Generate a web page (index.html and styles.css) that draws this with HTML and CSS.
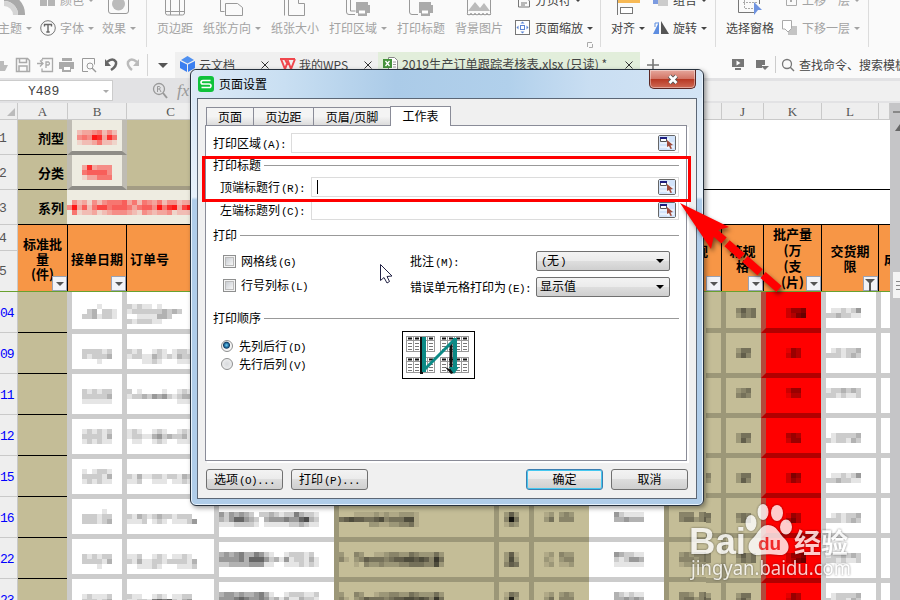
FILE: index.html
```
<!DOCTYPE html>
<html lang="zh-CN">
<head>
    <meta charset="UTF-8">
    <meta name="viewport" content="width=device-width, initial-scale=1.0">
    <title>页面设置</title>
    <link rel="stylesheet" href="styles.css">
</head>
<body>
    <div class="app">
        <!-- Ribbon -->
        <div class="ribbon">
            <div class="tool theme">
                <svg class="icon" width="40" height="16"><path d="M4 -6A20 20 0 0 1 25 15H18A14 14 0 0 0 4 1z" fill="#aaa"/><path d="M4 1A14 14 0 0 1 18 15H13A9 9 0 0 0 4 6z" fill="#d5d5d5"/></svg>
                <div class="label">主题<i class="caret"></i></div>
            </div>
            <div class="tool font">
                <div class="label upper"><svg width="16" height="16"><path d="M0 0h7v14H0zM8 0h7v14H8z" fill="#b5b5b5"/></svg>颜色<i class="caret"></i></div>
                <div class="label"><svg width="16" height="16"><circle cx="8" cy="8" r="7.3" fill="none" stroke="#777"/><path d="M4.5 6.500V4.500h7v2M8 4.500v7.500M6.300 12h3.400" fill="none" stroke="#666" stroke-width="1.400"/></svg>字体<i class="caret"></i></div>
            </div>
            <div class="tool effect line">
                <svg class="icon" width="44" height="16"><path d="M6.500 0v11q0 2.500 2.500 2.500h15q2.500 0 2.500-2.500V0" fill="none" stroke="#999"/><circle cx="16.500" cy="4" r="6.500" fill="#bbb"/></svg>
                <div class="label">效果<i class="caret"></i></div>
            </div>
            <div class="tool margins">
                <svg class="icon" width="40" height="16"><path d="M8.500 0v13q0 2 2 2h15q2 0 2-2V0M13.500 0v15M22.500 0v15M9 11.500h18" fill="none" stroke="#999"/></svg>
                <div class="label">页边距</div>
            </div>
            <div class="tool wide">
                <svg class="icon" width="48" height="16"><path d="M17.500 0v11.500h4M22.500 15.500v-12h12l5 4v8z" fill="none" stroke="#999"/></svg>
                <div class="label">纸张方向<i class="caret"></i></div>
            </div>
            <div class="tool narrow">
                <svg class="icon" width="48" height="16"><path d="M13.500 0v15.500M17.500 0v15.500h16V3.500h-6V0" fill="none" stroke="#999"/></svg>
                <div class="label">纸张大小</div>
            </div>
            <div class="tool wide">
                <svg class="icon" width="48" height="16"><path d="M17.500 0v12q0 2.500 2.500 2.500h6M21.500 0v11h5" fill="none" stroke="#999"/><path d="M27 4v-2h12v3h2v8h-3v3H29v-3h-2V4z" fill="#aaa"/><path d="M30 10.500h6v3h-6z" fill="#fff"/></svg>
                <div class="label">打印区域<i class="caret"></i></div>
            </div>
            <div class="tool narrow">
                <svg class="icon" width="48" height="16"><path d="M12.500 0v12q0 2.500 2.500 2.500h6" fill="none" stroke="#999"/><path d="M22 4v-2h12v3h2v8h-3v3H24v-3h-2V4z" fill="#aaa"/><path d="M25 10.500h6v3h-6z" fill="#fff"/></svg>
                <div class="label">打印标题</div>
            </div>
            <div class="tool picture">
                <svg class="icon" width="48" height="16"><path d="M12.500 0v13.500M35.500 0v13.500M12 14.500h24" fill="none" stroke="#999"/><path d="M13 11l7-9 5 6 4-5 6 8z" fill="#bbb"/><path d="M12 13q2 4 4 0q2 4 4 0q2 4 4 0q2 4 4 0q2 4 4 0q2 4 4 0" fill="none" stroke="#aaa"/></svg>
                <div class="label">背景图片</div>
            </div>
            <div class="tool scale line dark">
                <div class="label upper"><svg width="16" height="16"><path d="M3.500 8v7h11V9l-3-3H8M6 11h6M6 13h4" fill="none" stroke="#777"/></svg>分页符<i class="caret"></i></div>
                <div class="label"><svg width="16" height="16"><rect x=".5" y=".5" width="14" height="14" fill="#fff" stroke="#777"/><rect x="5.500" y="5.500" width="4" height="4" fill="none" stroke="#5d86d6"/><path d="M7.500 1.500l2 2h-4zM7.500 13.500l2-2h-4zM1.500 7.500l2-2v4zM13.500 7.500l-2-2v4z" fill="#5d86d6"/></svg>页面缩放<i class="caret"></i></div>
                <svg class="launcher" width="6" height="6"><path d="M.5 5V.5H5M5.500 2v3.500H2" fill="none" stroke="#aaa"/></svg>
            </div>
            <div class="tool align dark">
                <svg class="icon" width="42" height="16"><path d="M6.500 0v15" stroke="#777"/><path d="M7 0h22v3H7z" fill="#f7b955"/><rect x="9.500" y="7.500" width="12" height="6" fill="#fff" stroke="#777"/></svg>
                <div class="label">对齐<i class="caret"></i></div>
            </div>
            <div class="tool rotate line dark">
                <div class="label upper"><svg width="16" height="16"><path d="M0 5h9v7H0z" fill="#7c9be0"/><path d="M5 8h10v6H5z" fill="#ccc"/></svg>组合<i class="caret"></i></div>
                <div class="label"><svg width="16" height="16"><path d="M0 14L6 2v12z" fill="#5d8de0"/><path d="M8 14V1l8 13z" fill="#555"/><path d="M2 7V3h4" fill="none" stroke="#5d8de0"/></svg>旋转<i class="caret"></i></div>
            </div>
            <div class="tool pane dark">
                <svg class="icon" width="48" height="16"><path d="M12.500 0v12.500h16M33.500 0v4" fill="none" stroke="#777"/><path d="M18.500 0v8.500h9M17 2.500h15" fill="none" stroke="#aaa" stroke-dasharray="2 1"/><path d="M28 2l8 8h-4l-4 5z" fill="#6f93e0"/></svg>
                <div class="label">选择窗格</div>
            </div>
            <div class="tool layer line">
                <div class="label upper"><svg width="16" height="16"><path d="M4.500 4v9.500h10V5" fill="none" stroke="#aaa"/><path d="M9 10V5" stroke="#aaa" stroke-width="2"/></svg>上移一层<i class="caret"></i></div>
                <div class="label"><svg width="16" height="16"><path d="M6 6h9v9H6z" fill="#c4c4c4"/><path d="M.5.5h9v8L6 12 3 9H.5z" fill="#fff" stroke="#aaa"/></svg>下移一层<i class="caret"></i></div>
            </div>
        </div>

        <!-- Quick access and document tabs -->
        <div class="tabbar">
            <svg class="quick" width="175" height="26">
                <path d="M0 9h4v4h4l-3 6H0z" fill="#bbb"/>
                <path d="M16.500 6.500h11l2 2v11h-13zM19.500 6.500v4h7v-4M19 19v-5h8v5" fill="none" stroke="#aaa" stroke-width="1.500"/>
                <path d="M42 6.500h10.500v13H42v-3M42 9v-2M37 11.500h6m-3-3l3 3-3 3M46 16V10h2.500q2 1.500 0 3H46" fill="none" stroke="#aaa" stroke-width="1.300"/>
                <path d="M62 6h10v3H62zM59 10h15v7h-3v3H62v-3h-3z" fill="#aaa"/><path d="M64 15h6v3h-6z" fill="#fff"/>
                <path d="M88 19.500h-5.500v-13h12v6" fill="none" stroke="#999"/><circle cx="90" cy="14" r="3" fill="none" stroke="#999"/><path d="M92 16l4 4" stroke="#999" stroke-width="1.500"/>
                <path d="M107 10q6-5 9 0q1 4-5 8" fill="none" stroke="#666" stroke-width="2.500"/><path d="M105 7v7h6z" fill="#666"/>
                <path d="M137 10q-6-5-9 0q-1 4 4 8" fill="none" stroke="#bbb" stroke-width="2.500"/><path d="M139 7v7h-6z" fill="#bbb"/>
                <path d="M147.500 2v22" stroke="#d5d5d5"/>
                <path d="M158 11h10l-5 5z" fill="#555"/>
            </svg>
            <div class="tab cloud">
                <svg width="15" height="16"><path d="M7.500 0L14 4 7.500 7.500 1 4z" fill="#4f90f0"/><path d="M0 5l7 3.500V16l-7-4z" fill="#3b7ff0"/><path d="M15 5L8 8.500V16l7-4z" fill="#3b7ff0"/></svg>
                <span>云文档</span><svg class="close" width="8" height="8"><path d="M.5.5l7 7M7.500.5l-7 7" stroke="#333"/></svg>
            </div>
            <div class="tab wps">
                <svg width="17" height="14"><path d="M1 2h15M2 2l4 10 3-8 3 8 4-10M6 2l3 6" fill="none" stroke="#f0474d" stroke-width="2"/></svg>
                <span>我的WPS</span><svg class="close" width="8" height="8"><path d="M.5.5l7 7M7.500.5l-7 7" stroke="#333"/></svg>
            </div>
            <div class="tab file">
                <svg width="15" height="14"><path d="M5.500.5h6l3 3v10h-9z" fill="#fff" stroke="#888"/><path d="M10 5h3M10 7.500h3M10 10h3" stroke="#999"/><path d="M0 2h9v9H0z" fill="#45923b"/><path d="M2.500 4l4 5M6.500 4l-4 5" stroke="#fff" stroke-width="1.300"/></svg>
                <span>2019生产订单跟踪考核表.xlsx (只读) *</span><svg class="close" width="8" height="8"><path d="M.5.5l7 7M7.500.5l-7 7" stroke="#333"/></svg>
            </div>
            <svg class="plus" width="14" height="14"><path d="M7 1v12M1 7h12" stroke="#777" stroke-width="1.600"/></svg>
            <svg class="tools" width="66" height="26"><path d="M2 7h12v8H2zM5 16h6v2H5z" fill="#777"/><path d="M6.500 8.500v5l4-2.500z" fill="#fff"/><path d="M26 8h9v5h-3v3h-6z" fill="#777"/><path d="M31 14h8l-4 4z" fill="#777"/><path d="M45.500 4v17" stroke="#ccc"/><circle cx="57" cy="12" r="4.500" fill="none" stroke="#777" stroke-width="1.300"/><path d="M60 15l4 4" stroke="#777" stroke-width="1.500"/></svg>
            <span class="search">查找命令、搜索模板</span>
        </div>

        <!-- Name box and formula bar -->
        <div class="formula">
            <div class="namebox">Y489<i class="caret"></i></div>
            <svg width="16" height="18"><circle cx="7" cy="7" r="5.500" fill="none" stroke="#999" stroke-width="1.300"/><path d="M11 11l4 5" stroke="#999" stroke-width="2"/><path d="M5.500 10V4.500h2q1.500 1 0 2.500h-2m2 0l1.500 3" fill="none" stroke="#999"/></svg>
            <span class="fx">fx</span>
            <div class="input"></div>
        </div>

        <div class="sheet">
            <div class="grid">
                <div class="frozen">
                    <div class="col corner"><svg width="8" height="8"><path d="M8 0v8H0z" fill="#bbb"/></svg></div>
                    <div class="col">A</div><div class="col">B</div><div class="col">C</div>
                    <div class="col hidden"></div>
                    <div class="col">J</div><div class="col">K</div><div class="col">L</div><div class="col"></div>

                    <div class="num">1</div>
                    <div class="name">剂型</div>
                    <div class="pale boxed"><span class="mosaic red" data-rows="23345242/45498385/12235221"></span></div>
                    <div class="khaki"></div><div class="blank"></div>

                    <div class="num">2</div>
                    <div class="name">分类</div>
                    <div class="pale boxed"><span class="mosaic red" data-rows="383444/566664/133555"></span></div>
                    <div class="khaki shaded"></div><div class="blank ruled"></div>

                    <div class="num">3</div>
                    <div class="name">系列</div>
                    <div class="pale wide"><span class="mosaic red" data-rows="0423142455563525435244233/4936257756665356649589379/0512231234443214323341222"></span></div>
                    <div class="blank"></div>

                    <div class="num two"><b>4</b><b>5</b></div>
                    <div class="head">标准批<br>量<br>(件)<i class="filter"></i></div>
                    <div class="head one">接单日期<i class="filter"></i></div>
                    <div class="head left">订单号</div>
                    <div class="head hidden end">规<br>&nbsp;<i class="filter"></i></div>
                    <div class="head">箱规<br>格<i class="filter"></i></div>
                    <div class="head tall">批产量<br>(万<br>(支<br>(片)<i class="filter"></i></div>
                    <div class="head">交货期<br>限<i class="filter funnel"></i></div>
                    <div class="head last">成</div>
                </div>
                <div class="panes">
                    <div class="rows"></div>
                    <div class="pane" id="leftPane"></div>
                    <div class="pane" id="midPane"></div>
                    <div class="pane" id="rightPane"></div>
                </div>
            </div>
            <div class="scroll">
                <svg width="10" height="200"><path d="M3 8h7v2H3z" fill="#888"/><path d="M10 21v7H5z" fill="#666"/><path d="M3 169h7v26H3z" fill="#f4f4f4"/><path d="M6 178.500h4M6 182.500h4M6 186.500h4" stroke="#888"/></svg>
            </div>
        </div>
    </div>

    <!-- Page setup dialog -->
    <div class="dialog">
        <div class="titlebar">
            <svg width="16" height="16"><rect width="16" height="16" rx="3" fill="#0fc23b"/><path d="M12.500 4.500H5q-2 0-2 1.700T5 8h6q2 0 2 1.800t-2 1.700H3.500" fill="none" stroke="#fff" stroke-width="1.600"/></svg>
            <span>页面设置</span>
            <button class="shut"><svg width="14" height="11"><path d="M3.500 2l7 7M10.500 2l-7 7" stroke="#555" stroke-width="4.500"/><path d="M3.500 2l7 7M10.500 2l-7 7" stroke="#fff" stroke-width="2.600"/></svg></button>
        </div>
        <div class="client">
            <div class="tabs">
                <div class="t1">页面</div><div class="t2">页边距</div><div class="t3">页眉/页脚</div><div class="t4 active">工作表</div>
            </div>
            <div class="panel">
                <div class="field area"><label>打印区域<s>(A):</s></label><div class="ref"><i class="picker"></i></div></div>
                <div class="legend title">打印标题</div>
                <div class="field indent"><label>顶端标题行<s>(R):</s></label><div class="ref"><em></em><i class="picker"></i></div></div>
                <div class="field indent second"><label>左端标题列<s>(C):</s></label><div class="ref"><i class="picker"></i></div></div>
                <div class="legend print">打印</div>
                <div class="options">
                    <div class="checks">
                        <div><i class="check"></i><label>网格线<s>(G)</s></label></div>
                        <div><i class="check"></i><label>行号列标<s>(L)</s></label></div>
                    </div>
                    <div class="selects">
                        <div><label>批注<s>(M):</s></label><span class="select"><s>(</s>无<s>)</s></span></div>
                        <div><label>错误单元格打印为<s>(E):</s></label><span class="select">显示值</span></div>
                    </div>
                </div>
                <div class="legend order">打印顺序</div>
                <div class="ordering">
                    <div class="radios">
                        <div><i class="radio on"></i><label>先列后行<s>(D)</s></label></div>
                        <div><i class="radio"></i><label>先行后列<s>(V)</s></label></div>
                    </div>
                    <svg class="preview" width="73" height="48">
                        <defs>
                            <g id="page">
                                <rect x=".5" y=".5" width="28" height="15" fill="#fff" stroke="#999"/>
                                <path d="M1 4.500h28M7.500 0v16M14.500 0v16M21.500 0v16" stroke="#999"/>
                                <path d="M2 2.500h4M9 2.500h4M16 2.500h4M23 2.500h4" stroke="#111" stroke-width="2"/>
                                <path d="M2 7.500h4m3 0h4m3 0h4m3 0h4M2 10.500h4m3 0h4m3 0h4m3 0h4M2 13.500h4m3 0h4m3 0h4m3 0h4" stroke="#777"/>
                            </g>
                        </defs>
                        <rect x=".5" y=".5" width="72" height="47" fill="#fff" stroke="#000"/>
                        <use href="#page" x="4" y="5"/><use href="#page" x="38" y="5"/>
                        <use href="#page" x="4" y="26"/><use href="#page" x="38" y="26"/>
                        <path d="M19.500 6v37M49 12v27" stroke="#111" stroke-width="3"/>
                        <path d="M43 36l6 7 5-2z" fill="#111"/>
                        <path d="M22 6v35M53 7v32" fill="none" stroke="#0c8a86" stroke-width="4"/>
                        <path d="M22 39L52 9" fill="none" stroke="#0c8a86" stroke-width="3"/>
                        <path d="M47 36h10l-5 7z" fill="#0c8a86"/>
                    </svg>
                </div>
            </div>
            <div class="buttons">
                <button>选项<s>(O)...</s></button>
                <button>打印<s>(P)...</s></button>
                <button class="ok">确定</button>
                <button>取消</button>
            </div>
        </div>
    </div>

    <!-- Annotation, pointer and watermark -->
    <div class="highlight"></div>
    <svg class="overlay" width="900" height="600">
        <g class="arrow">
            <path d="M680 203L729 227 715 231 711 249z" fill="#f00"/>
            <path d="M712 230L779 289" stroke="#f00" stroke-width="8" stroke-dasharray="16 4 20 4 20 4 25"/>
        </g>
        <path d="M380.500 264.500v16l3.500-3 3 5.500 2.500-1.500-2.500-5 5-.5z" fill="#fff" stroke="#224"/>
        <g class="mark">
            <text x="689" y="554" class="bai" textLength="57" lengthAdjust="spacingAndGlyphs">Bai</text>
            <ellipse cx="751" cy="523" rx="5.500" ry="8"/><ellipse cx="763" cy="512" rx="5.500" ry="8"/><ellipse cx="777" cy="513" rx="6" ry="8"/><ellipse cx="786" cy="527" rx="6" ry="7.500"/>
            <path d="M768 525c9 0 11 9 17 14c7 7 3 17-6 16c-8-1-14-1-20 0c-10 1-14-9-7-16c6-5 8-14 16-14z"/>
            <text x="758" y="550" class="du">du</text>
            <text x="794" y="553" class="jy">经验</text>
            <text x="691" y="575" class="url" textLength="160" lengthAdjust="spacingAndGlyphs">jingyan.baidu.com</text>
        </g>
    </svg>
    <script src="script.js"></script>
</body>
</html>
```
FILE: styles.css
```
body {
    margin: 0;
    width: 900px;
    height: 600px;
    overflow: hidden;
    position: relative;
    font-family: "Noto Sans CJK SC", sans-serif;
    font-size: 12px;
    color: #444;
}
svg {
    display: block;
    flex: none;
}
i, em {
    font-style: normal;
}
.app {
    display: flex;
    flex-direction: column;
    height: 600px;
}
.caret {
    border: 3px solid transparent;
    border-top-color: currentColor;
    border-bottom: 0;
    margin-left: 4px;
}
/* Ribbon */
.ribbon {
    display: flex;
    height: 52px;
    overflow: hidden;
    background: #fafafa;
    color: #a3a3a3;
    flex: none;
}
.tool {
    box-sizing: border-box;
    height: 47px;
    flex: none;
}
.dark {
    color: #444;
}
.line {
    border-right: 1px solid #dcdcdc;
}
.icon {
    height: 16px;
}
.label {
    display: flex;
    align-items: center;
    height: 24px;
    line-height: 24px;
    white-space: nowrap;
}
.label svg {
    margin-right: 4px;
}
.upper {
    margin-top: -12px;
    margin-bottom: 4px;
}
.launcher {
    margin: 2px 0 0 72px;
}
.theme { width: 40px; }
.theme .label { margin-left: -2px; }
.font { width: 62px; }
.effect { width: 45px; }
.margins { width: 56px; padding-left: 10px; }
.wide { width: 68px; }
.narrow { width: 58px; }
.picture { width: 60px; }
.scale { width: 86px; }
.align { width: 52px; padding-left: 10px; }
.rotate { width: 63px; }
.tool.pane { width: 66px; padding-left: 10px; }
.layer { width: 87px; }
/* Tabs */
.tabbar {
    display: flex;
    align-items: center;
    height: 26px;
    background: #fafafa;
    flex: none;
    overflow: hidden;
}
.tab {
    display: flex;
    flex: none;
    align-items: center;
    height: 26px;
    box-sizing: border-box;
    padding: 0 8px 2px 5px;
    background: #f0f0f0;
    white-space: nowrap;
}
.tab span {
    margin-left: 4px;
}
.cloud { width: 102px; }
.wps { width: 101px; padding: 0 6px 2px 2px; }
.wps span { margin-left: 3px; }
.file { width: 262px; padding-right: 7px; background: #e2eedb; }
.file span { font-size: 12.2px; }
.close {
    margin-left: auto;
    margin-top: 2px;
}
.plus { margin-left: 6px; }
.tools { margin-left: 70px; }
.search {
    margin-left: 3px;
    padding-bottom: 2px;
    flex: none;
    white-space: nowrap;
}
/* Formula bar */
.formula {
    display: flex;
    align-items: center;
    height: 25px;
    background: #e2e2e4;
    color: #999;
    flex: none;
}
.namebox {
    box-sizing: border-box;
    width: 113px;
    height: 21px;
    padding: 2px 3px 0 28px;
    margin-right: 39px;
    display: flex;
    align-items: center;
    background: #fff;
    border: 1px solid #ccc;
    border-left: 0;
    font: 13px "Liberation Mono", monospace;
    color: #444;
}
.namebox .caret {
    margin-left: auto;
    color: #aaa;
}
.fx {
    margin-left: 9px;
    font: italic 17px "Liberation Serif", serif;
}
.formula .input {
    flex: 1;
    height: 20px;
    margin-left: 20px;
    background: #f0f0f0;
}
/* Sheet */
.sheet {
    display: flex;
    height: 497px;
    overflow: hidden;
}
.grid {
    width: 890px;
    overflow: hidden;
}
.scroll {
    width: 10px;
    background: #c5c5c7;
}
.frozen {
    display: grid;
    grid-template-columns: 18px 50px 59px 88px 120px 160px 36px 57px 77px 57px 42px 58px 57px 11px;
    grid-template-rows: 17px 35px 35px 35px 66px;
    border-bottom: 1px solid #69a12f;
    box-sizing: border-box;
    height: 189px;
}
.col {
    background: #eee;
    border-right: 1px solid #c9c9c9;
    border-bottom: 1px solid #c9c9c9;
    font: 13px/18px "Liberation Serif", serif;
    color: #555;
    text-align: center;
}
.corner svg {
    margin: 5px 0 0 7px;
}
.num {
    background: #eee;
    border-right: 1px solid #c9c9c9;
    border-bottom: 1px solid #c9c9c9;
    font: 13px/37px "Liberation Mono", monospace;
    color: #555;
    text-indent: -1px;
}
.two {
    display: flex;
    flex-direction: column;
    border-bottom: 0;
}
.two b {
    height: 40px;
    font-weight: normal;
    line-height: 42px;
}
.two b:first-child {
    height: 25px;
    line-height: 28px;
    border-bottom: 1px solid #c9c9c9;
}
.name {
    background: #c4bd97;
    border-bottom: 1px solid #000;
    color: #000;
    font-weight: bold;
    font-size: 13px;
    line-height: 36px;
    text-align: right;
    padding-right: 4px;
}
.khaki {
    background: #c4bd97;
}
.shaded {
    box-sizing: border-box;
    border-bottom: 4px solid #a39c84;
}
.pale {
    background: #eeece1;
    display: flex;
    align-items: center;
    justify-content: center;
    overflow: hidden;
}
.boxed {
    border: 5px solid #bfbcb3;
    border-top: 0;
    border-bottom: 4px solid #8f8d87;
    margin-left: -1px;
    padding-top: 4px;
}
.pale.wide {
    width: auto;
    grid-column: 3 / 5;
    justify-content: flex-start;
    margin-left: -1px;
    border-bottom: 1px solid #000;
}
.blank {
    grid-column: 5 / 15;
    background: #fff;
}
.ruled {
    border-bottom: 1px solid #000;
}
.head {
    position: relative;
    background: #f79646;
    border: solid #000;
    border-width: 0 1px 0 0;
    box-shadow: 0 -1px 0 #000;
    color: #000;
    font-weight: bold;
    font-size: 13px;
    line-height: 15px;
    text-align: center;
    align-content: center;
    white-space: nowrap;
}
.head.left {
    text-align: left;
    padding-left: 3px;
}
.hidden {
    grid-column: 5 / 11;
}
.head.end {
    text-align: right;
    padding-right: 13px;
}
.head.tall {
    line-height: 16px;
}
.head.last {
    text-align: left;
    padding-left: 5px;
    border-right: 0;
    overflow: hidden;
}
.filter {
    position: absolute;
    right: 0;
    bottom: 0;
    width: 13px;
    height: 13px;
    border: 1px solid #9aa2b5;
    background: #f2f3f7;
}
.filter::after {
    content: "";
    position: absolute;
    left: 3px;
    top: 5px;
    border: 4px solid transparent;
    border-top-color: #555;
    border-bottom: 0;
}
.funnel::after {
    left: 1px;
    top: 2px;
    width: 2px;
    height: 4px;
    border-bottom: 4px solid transparent;
    background: linear-gradient(#555, #555) 50% 0 / 2px 8px no-repeat;
}
.mosaic {
    display: block;
}
.red {
    color: #f00;
}
.panes {
    display: flex;
    height: 308px;
    overflow: hidden;
}
.rows {
    width: 18px;
    flex: none;
    background: #eee;
}
.rows div {
    box-sizing: border-box;
    height: 41px;
    border-right: 1px solid #c9c9c9;
    border-bottom: 1px solid #c9c9c9;
    font: 13px/43px "Liberation Mono", monospace;
    letter-spacing: -1px;
    color: #00f;
}
.panes .pane {
    display: flex;
    flex: none;
}
.cell {
    box-sizing: border-box;
    border-left: 5px solid rgba(0, 0, 0, 0.2);
    border-bottom: 5px solid rgba(0, 0, 0, 0.2);
    background: #fff;
    color: #000;
    overflow: hidden;
}
.cell.tan {
    background: #c4bd97;
}
.cell.hot {
    background: #f00;
    border-left-color: #b24a3c;
    border-bottom-color: rgba(0, 0, 0, 0.3);
}
.cell.plain {
    border-left: 0;
}
.cell.rule {
    border-left: 0;
    border-bottom: 1px solid #000;
}
/* Dialog */
.dialog {
    position: absolute;
    left: 190px;
    top: 69px;
    width: 512px;
    height: 435px;
    border: 1px solid #27313d;
    border-radius: 6px;
    background: linear-gradient(#d5e5f5 0, #e8f1fa 127px, #b0cde9 130px);
    box-shadow: inset 0 0 0 1px #e9f3fc, 2px 2px 5px rgba(0, 0, 0, 0.4);
    color: #000;
}
.dialog s {
    font: 11px/12px "Liberation Mono", monospace;
    letter-spacing: -0.6px;
    text-decoration: none;
    margin-left: 1px;
}
.titlebar {
    display: flex;
    align-items: center;
    height: 28px;
    margin: 0 1px;
    padding-left: 6px;
    border-radius: 5px 5px 0 0;
    background: linear-gradient(90deg, #dce9f6, #c9dff2 18%, #abcbe8 40%, #b1d0eb 62%, #c9def2 78%, #d3e4f5);
}
.titlebar span {
    margin-left: 5px;
    padding-bottom: 2px;
}
.shut {
    width: 47px;
    height: 19px;
    margin: 0 6px 9px auto;
    padding: 0;
    border: 1px solid #5b2724;
    border-top: 0;
    border-radius: 0 0 5px 5px;
    background: linear-gradient(#e6a79c, #d37566 48%, #b73722 50%, #cf6a55);
    box-shadow: inset 0 0 0 1px rgba(255, 255, 255, 0.4);
    display: flex;
    align-items: center;
    justify-content: center;
}
.client {
    box-sizing: border-box;
    width: 500px;
    height: 401px;
    margin-left: 6px;
    padding-top: 7px;
    border: 1px solid #5c6776;
    background: #f0f0f0;
}
.tabs {
    display: flex;
    align-items: flex-end;
    height: 20px;
    margin: 0 0 -1px 8px;
    position: relative;
}
.tabs div {
    box-sizing: border-box;
    height: 19px;
    border: 1px solid #8a8c98;
    border-right-width: 0;
    background: linear-gradient(#f4f4f4 50%, #dcdcdc);
    line-height: 17px;
    text-align: center;
}
.t1 { width: 47px; }
.t2 { width: 60px; }
.t3 { width: 77px; }
.tabs .active {
    width: 61px;
    height: 20px;
    background: #fff;
    border-right-width: 1px;
    border-bottom: 0;
}
.panel {
    box-sizing: border-box;
    width: 482px;
    height: 336px;
    margin-left: 7px;
    padding: 7px 7px 0;
    border: 1px solid #8a8c98;
    background: #fff;
    box-shadow: 2px 2px 0 #fff;
}
.panel label {
    padding-bottom: 2px;
    white-space: nowrap;
}
.field {
    display: flex;
    align-items: center;
    height: 20px;
}
.field label {
    width: 78px;
}
.indent label {
    width: 91px;
    padding-left: 7px;
}
.second {
    margin-top: 3px;
}
.ref {
    display: flex;
    flex: 1;
    align-items: center;
    box-sizing: border-box;
    height: 20px;
    padding: 0 2px 0 5px;
    border: 1px solid #dcdcdc;
}
.ref em {
    width: 1px;
    height: 14px;
    background: #000;
}
.picker {
    box-sizing: border-box;
    width: 18px;
    height: 16px;
    margin-left: auto;
    border: 1px solid #666;
    border-radius: 2px;
}
.legend {
    display: flex;
    align-items: center;
    box-sizing: border-box;
    padding-bottom: 2px;
    white-space: nowrap;
}
.legend::after {
    content: "";
    flex: 1;
    height: 1px;
    margin: 2px 0 0 3px;
    background: #999;
}
.legend.title { height: 24px; }
.legend.print { height: 31px; }
.legend.order { height: 42px; }
.options {
    display: flex;
    height: 46px;
}
.checks {
    width: 188px;
    padding-left: 9px;
}
.checks div {
    display: flex;
    align-items: center;
    height: 20px;
    margin-bottom: 4px;
}
.check {
    width: 7px;
    height: 7px;
    margin: 0 7px 0 3px;
    border: 1px solid #bbb;
    background: linear-gradient(135deg, #c9cdd2, #f6f6f6);
    box-shadow: 0 0 0 1px #f4f4f4, 0 0 0 2px #8e8f8f;
}
.selects div {
    display: flex;
    align-items: center;
    height: 20px;
    margin-bottom: 6px;
}
.selects label {
    width: 126px;
}
.select {
    box-sizing: border-box;
    position: relative;
    width: 134px;
    height: 20px;
    padding-left: 3px;
    border: 1px solid #707070;
    border-radius: 2px;
    background: linear-gradient(#f3f3f3, #ebebeb 48%, #dedede 50%, #cfcfcf);
    line-height: 16px;
}
.select::after {
    content: "";
    position: absolute;
    right: 5px;
    top: 7px;
    border: 4px solid transparent;
    border-top-color: #000;
    border-bottom: 0;
}
.ordering {
    display: flex;
}
.radios {
    width: 181px;
    padding-left: 8px;
}
.radios div {
    display: flex;
    align-items: center;
    height: 14px;
    margin-bottom: 4px;
}
.radio {
    box-sizing: border-box;
    width: 12px;
    height: 12px;
    margin-right: 6px;
    border: 1px solid #8e8f8f;
    border-radius: 50%;
    background: radial-gradient(#d8dadd, #f4f4f4);
}
.radio.on {
    background: radial-gradient(circle at 45% 42%, #6fd0f5 0, #145a8e 2.500px, #123a5e 3px, #f4f4f4 4px);
}
.preview {
    margin-top: -8px;
}
.buttons {
    display: flex;
    gap: 8px;
    margin: 8px 8px 0;
}
.buttons button {
    width: 77px;
    height: 21px;
    padding: 0 0 2px;
    border: 1px solid #707070;
    border-radius: 3px;
    background: linear-gradient(#f3f3f3, #ebebeb 48%, #dddddd 50%, #cfcfcf);
    font: 12px/17px "Noto Sans CJK SC", sans-serif;
    color: #000;
}
.buttons .ok {
    margin-left: auto;
    border-color: #3c7fb1;
    box-shadow: inset 0 0 0 1px #45c8f0;
}
/* Layers over the dialog */
.highlight {
    position: absolute;
    left: 202px;
    top: 156px;
    width: 483px;
    height: 40px;
    border: 3px solid #f00;
}
.overlay {
    position: absolute;
    left: 0;
    top: 0;
}
.arrow {
    filter: drop-shadow(2px 3px 2px rgba(0, 0, 0, 0.5));
}
.mark {
    fill: #fff;
    opacity: 0.8;
    filter: drop-shadow(0 0 1px rgba(0, 0, 0, 0.6));
}
.bai {
    font: bold 36px "Liberation Sans", sans-serif;
}
.du {
    font: bold 19px "Liberation Sans", sans-serif;
    fill: #e33;
}
.jy {
    font: bold 27px "Noto Sans CJK SC", sans-serif;
}
.url {
    font: 20px "Noto Sans", sans-serif;
}
```
FILE: script.js
```
// Censored cell contents are 5px blocks, each digit is the block's opacity in tenths
function mosaic(rows) {
    const lines = rows.split('/');
    const width = Math.max(...lines.map(line => line.length)) * 5;
    let rects = '';
    lines.forEach((line, y) => {
        [...line].forEach((n, x) => {
            if (n !== '0') {
                rects += `<rect x="${x * 5}" y="${y * 5}" width="5" height="5" fill-opacity="${n / 10}"/>`;
            }
        });
    });
    return `<svg width="${width}" height="${lines.length * 5}" fill="currentColor" shape-rendering="crispEdges">${rects}</svg>`;
}

document.querySelectorAll('.mosaic').forEach(el => {
    el.innerHTML = mosaic(el.dataset.rows);
});

['04', '09', '11', '12', '15', '16', '22', '23'].forEach(n => {
    const row = document.createElement('div');
    row.textContent = n;
    document.querySelector('.rows').appendChild(row);
});

function addColumn(pane, width, type, heights, tops, left, data) {
    const column = document.createElement('div');
    heights.forEach((height, i) => {
        const cell = document.createElement('div');
        cell.className = 'cell ' + type;
        cell.style.width = width + 'px';
        cell.style.height = height + 'px';
        cell.style.paddingTop = tops[i] + 'px';
        cell.style.paddingLeft = left + 'px';
        if (data) {
            cell.innerHTML = mosaic(data[i % data.length]);
        }
        column.appendChild(cell);
    });
    document.getElementById(pane).appendChild(column);
}

const leftHeights = [42, 40, 45, 40, 40, 40, 40, 40];
const leftTops = [12, 15, 15, 10, 10, 10, 15, 15];
addColumn('leftPane', 49, 'tan rule', [41, 41, 41, 41, 41, 41, 41, 41], [0, 0, 0, 0, 0, 0, 0, 0], 0);
addColumn('leftPane', 55, '', leftHeights, leftTops, 10, [
    '0001/02302210/2231221', '222212/212223/0001', '212122/222223/111111', '121212/222213/121211',
    '101221/222213/121211', '00001/222122/222123', '212122/222213/0001', '121112/222123'
]);
addColumn('leftPane', 92, '', leftHeights, leftTops, 0, [
    '2121101/122222232320/001111332/2122211', '2120012101221/1221132121322/0001121000111',
    '2010000100121/1223243421233/0000000000111', '1210012100121/1221134232231/0110012100111',
    '0000000000000/2131122122132/1120011101121', '0000000000000/2132123221222/11120121011124',
    '1120012101121/21311221222213/00111210001112', '2110012101122/1122156562134'
]);

const midHeights = [250, 40, 40];
const midTops = [220, 10, 10];
addColumn('midPane', 120, '', midHeights, midTops, 0, [
    '42434320223212253221/32466432034445446732/11122221011111223211',
    '34345335421001222120/44445366642314122131/22333344411001112121',
    '34434334531001222112/44456544542313113221'
]);
addColumn('midPane', 160, 'tan', midHeights, midTops, 0, [
    '0001111212112221/4565544563444661/0000002211223341',
    '200320011233224322242/310235444345566565374/000103223222334443362',
    '200320012233224322242/310235444345566565374'
]);
addColumn('midPane', 35, 'tan', midHeights, midTops, 5, ['252/394/132', '251/262/354', '143/282']);
addColumn('midPane', 60, 'tan', midHeights, midTops, 10, ['120232/240333', '120322/210233/120112', '120232/240333']);
addColumn('midPane', 75, 'plain', midHeights, midTops, 25, ['421111/334333', '432211/212443/111111', '321211/334343']);
addColumn('midPane', 42, 'tan', midHeights, midTops, 10, ['333034/344235', '232334/333234/122122', '332034/344235']);

const rightHeights = [41, 45, 40, 40, 40, 40, 45, 40];
const rightTops = [16, 15, 10, 15, 15, 15, 15, 10];
addColumn('rightPane', 15, 'tan plain', rightHeights, rightTops, 0, ['', '', '', '', '3/2', '4/3', '3/3', '2/4']);
addColumn('rightPane', 40, 'tan', rightHeights, rightTops, 10, ['3534/2434', '244/353', '234/343', '244/253', '244/253', '343/244']);
addColumn('rightPane', 60, 'hot', rightHeights, rightTops, 20, ['2445/2356', '143/243', '244/133', '343/244', '254/243', '143/353']);
addColumn('rightPane', 55, '', rightHeights, rightTops, 0, ['0112124/2232211', '0121223/2221232', '1223232/2212112', '0122223/2122132']);
addColumn('rightPane', 14, '', rightHeights, rightTops, 0);

// Button face of the range picker
document.querySelectorAll('.picker').forEach(el => {
    el.innerHTML = '<svg width="16" height="14"><rect width="16" height="14" fill="#d3e4fb"/><path d="M1 7h14M1 11h14M9 2v11" stroke="#fff"/><path d="M1.500 2.500h6v3h-6z" fill="#fff" stroke="#555"/><path d="M1 1h7v2H1z" fill="#1d1d80"/><path d="M8 4l6 5-2.500.5 1.500 3-1.500.5-1.500-3L8 11z" fill="#a04a3a"/></svg>';
});
```
